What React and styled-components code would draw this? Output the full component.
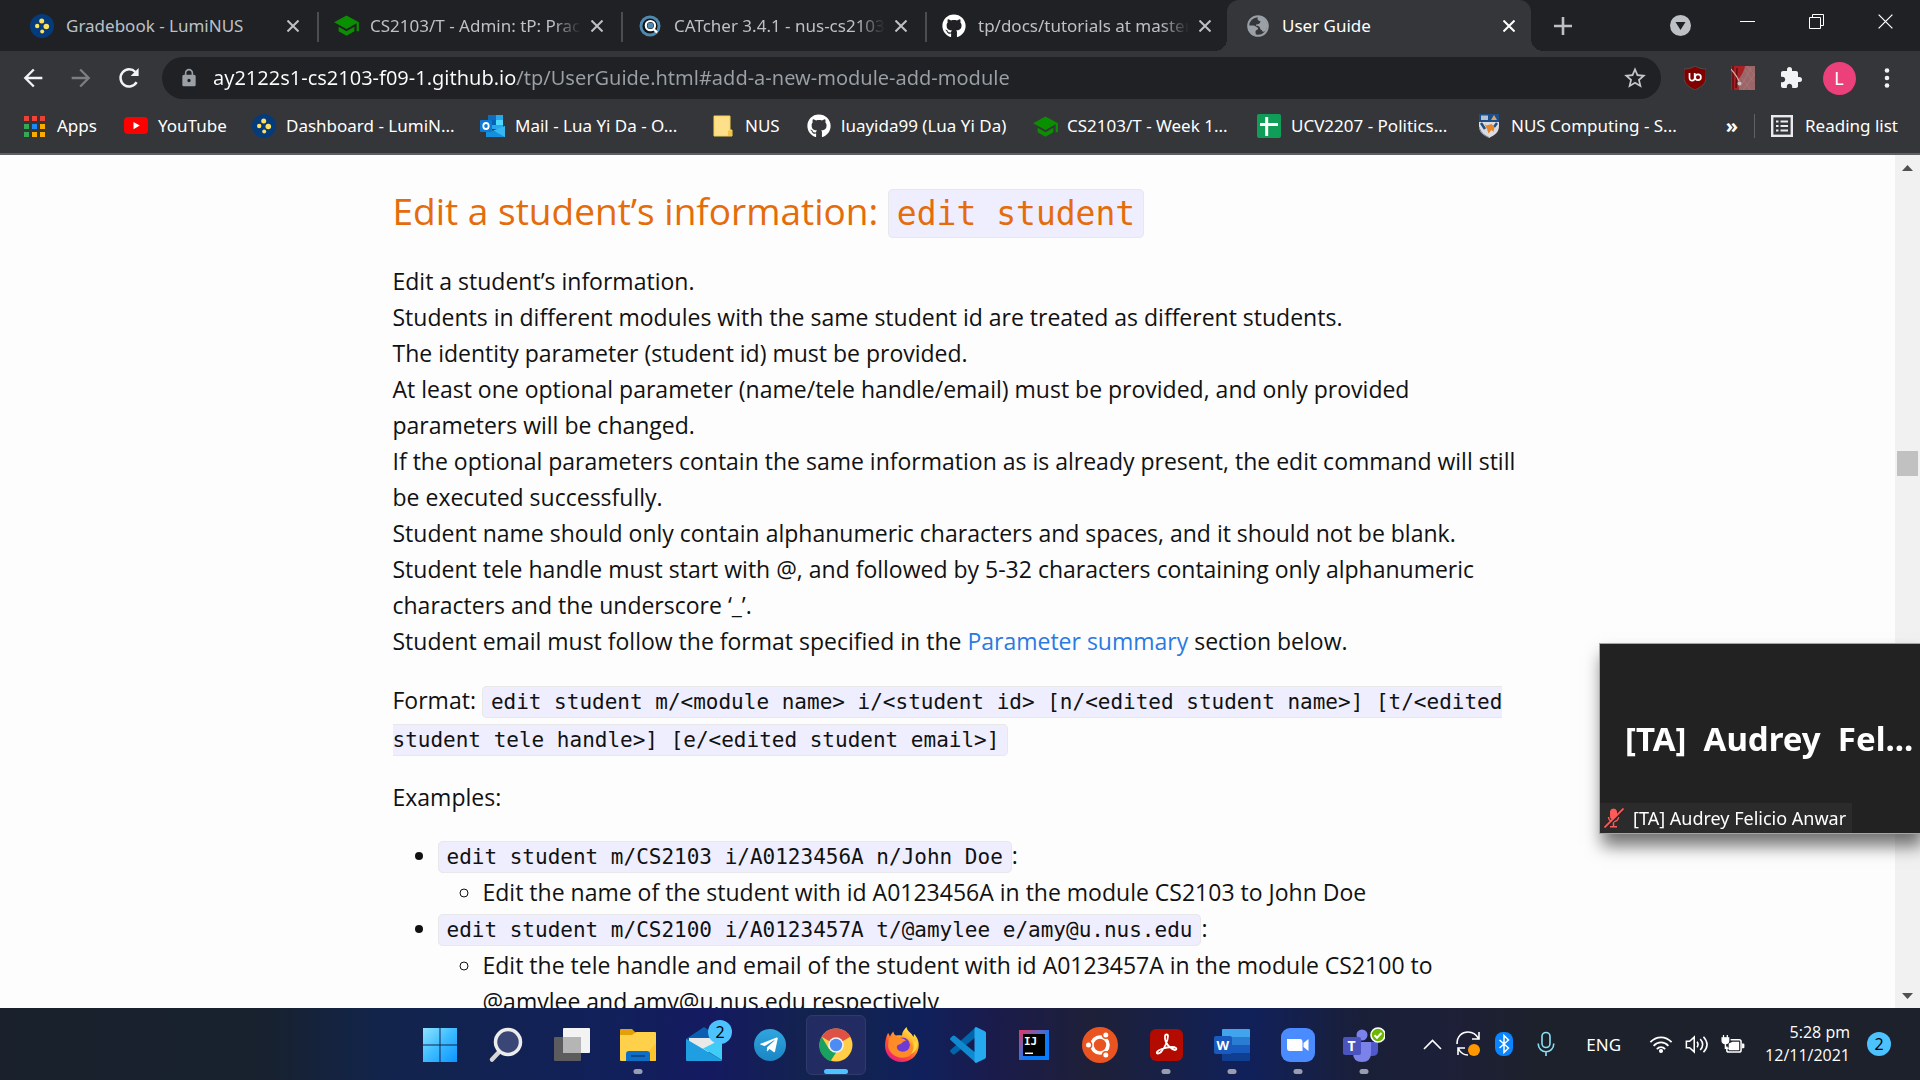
import React from "react";
import styled, { createGlobalStyle, css } from "styled-components";
import { FaGithub, FaTelegramPlane } from "react-icons/fa";
import { MdSchool, MdExtension, MdLock, MdStarBorder, MdArrowBack, MdArrowForward } from "react-icons/md";

const sans = `"Noto Sans", "Open Sans", sans-serif`;
const reading = `"Open Sans", "Noto Sans", sans-serif`;
const mono = `"DejaVu Sans Mono", monospace`;

const GlobalStyle = createGlobalStyle`
  *, *::before, *::after { box-sizing: border-box; }
  body { margin: 0; font-family: ${sans}; }
  button { border: 0; padding: 0; background: none; color: inherit; font: inherit; }
  a { text-decoration: none; color: inherit; }
  svg { display: block; flex: none; }
`;

const Screen = styled.div`
  height: 100vh;
  display: flex;
  flex-direction: column;
  overflow: hidden;
`;

/* ---------- browser chrome ---------- */

const TabStrip = styled.div`
  display: flex;
  height: 51px;
  flex: none;
  background: #202124;
  padding-left: 11px;
`;

const Tabs = styled.div`
  display: flex;
  flex: 0 1 1520px;
  min-width: 0;
`;

const Tab = styled.div`
  position: relative;
  flex: 1 1 0;
  min-width: 0;
  display: flex;
  align-items: center;
  gap: 12px;
  padding: 0 12px 0 18px;
  color: #bdc1c6;
  font-size: 17px;
  &:not(:first-child)::before {
    content: "";
    position: absolute;
    left: 2px;
    top: 12px;
    width: 2px;
    height: 30px;
    background: #4b4d51;
  }
  ${(p) =>
    p.$active &&
    css`
      background: #35363a;
      color: #fff;
      border-radius: 12px 12px 0 0;
      &&::before,
      &::after {
        content: "";
        position: absolute;
        left: -12px;
        top: auto;
        bottom: 0;
        width: 12px;
        height: 12px;
        background: radial-gradient(circle at 0 0, transparent 12px, #35363a 12px);
      }
      &::after {
        left: 100%;
        background: radial-gradient(circle at 100% 0, transparent 12px, #35363a 12px);
      }
    `}
`;

const TabTitle = styled.button`
  flex: 1;
  min-width: 0;
  overflow: hidden;
  white-space: nowrap;
  text-align: left;
  line-height: 24px;
  ${(p) => p.$fade && css`mask-image: linear-gradient(90deg, #000 calc(100% - 28px), transparent);`}
`;

const TabClose = styled.button`
  width: 20px;
  height: 20px;
  margin-left: -6px;
  display: grid;
  place-items: center;
`;

const NewTab = styled.button`
  width: 64px;
  display: grid;
  place-items: center;
  color: #bdc1c6;
`;

const WindowControls = styled.div`
  display: flex;
  margin-left: auto;
  color: #fff;
`;

const WindowButton = styled.button`
  width: 69px;
  height: 43px;
  display: grid;
  place-items: center;
`;

const TabSearch = styled(WindowButton)`
  height: 51px;
  width: 66px;
`;

const Toolbar = styled.div`
  display: flex;
  align-items: center;
  flex: none;
  height: 54px;
  padding: 0 9px;
  background: #35363a;
  color: #f1f3f4;
`;

const ToolButton = styled.button`
  width: 48px;
  height: 42px;
  display: grid;
  place-items: center;
  color: ${(p) => (p.$muted ? "#7c7e82" : "inherit")};
`;

const AddressBar = styled.label`
  flex: 1;
  min-width: 0;
  display: flex;
  align-items: center;
  gap: 14px;
  height: 42px;
  margin: 0 10px 0 9px;
  padding: 0 13px 0 17px;
  border-radius: 21px;
  background: #202124;
  color: #9aa0a6;
`;

const AddressInput = styled.input`
  flex: 1;
  min-width: 0;
  border: 0;
  outline: 0;
  padding: 0;
  height: 32px;
  font: 20px/32px ${sans};
  color: #9aa0a6;
  -webkit-text-fill-color: transparent;
  background: linear-gradient(90deg, #fff 304px, #9aa0a6 304px);
  background-clip: text;
`;

const Avatar = styled.span`
  width: 33px;
  height: 33px;
  border-radius: 50%;
  display: grid;
  place-items: center;
  background: #ec407a;
  color: #fff;
  font-size: 18px;
  line-height: 24px;
`;

const BookmarkBar = styled.nav`
  display: flex;
  align-items: center;
  flex: none;
  height: 50px;
  padding: 0 22px 6px;
  background: #35363a;
  border-bottom: 2px solid #5f6063;
  color: #fff;
  font-size: 17px;
  line-height: 24px;
`;

const Bookmark = styled.a`
  display: flex;
  align-items: center;
  gap: 10px;
  flex: 0 1 ${(p) => p.$width}px;
  min-width: 0;
  white-space: nowrap;
`;

const BookmarkIcon = styled.span`
  width: 25px;
  display: grid;
  place-items: center;
`;

const BookmarkEnd = styled.div`
  margin-left: auto;
  display: flex;
  align-items: center;
  gap: 16px;
`;

const Overflow = styled.button`
  font-size: 20px;
  font-weight: 700;
  line-height: 24px;
`;

const Divider = styled.span`
  width: 1px;
  height: 24px;
  background: #5f6368;
`;

const ReadingList = styled.button`
  display: flex;
  align-items: center;
  gap: 12px;
`;

/* ---------- document ---------- */

const Viewport = styled.main`
  flex: 1;
  min-height: 0;
  display: flex;
  background: #fdfdfd;
`;

const Scroller = styled.div`
  flex: 1;
  min-width: 0;
  overflow: hidden;
`;

const Article = styled.article`
  max-width: 1200px;
  margin: 0 auto;
  padding: 27px 22px 0 45px;
  color: #111;
  font-family: ${reading};
  font-size: 23px;
  line-height: 36px;
`;

const Code = styled.code`
  font-family: ${mono};
  font-size: ${(p) => (p.$large ? 33 : 21)}px;
  line-height: 1;
  padding: ${(p) => (p.$large ? 4 : 3)}px 8px;
  border: 1px solid #e8e8e8;
  border-radius: 5px;
  background: #eeeeff;
`;

const Heading = styled.h3`
  margin: 0 0 24px;
  color: #e46c0a;
  font-size: 37px;
  font-weight: 400;
  line-height: 57px;
`;

const Paragraph = styled.p`
  margin: 0 0 22px;
  line-height: ${(p) => (p.$coded ? 38 : 36)}px;
`;

const DocLink = styled.a`
  color: #2a7ae2;
`;

const List = styled.ul`
  margin: 0;
  padding-left: 45px;
  line-height: 37px;
`;

const SubItem = styled.li`
  line-height: 36px;
`;

const Scrollbar = styled.div`
  width: 25px;
  flex: none;
  display: flex;
  flex-direction: column;
  align-items: center;
  justify-content: space-between;
  background: #f1f1f1;
`;

const ScrollArrow = styled.button`
  height: 25px;
  display: grid;
  place-items: center;
`;

const Track = styled.div`
  flex: 1;
  display: grid;
  grid-template-rows: 271fr 25px 507fr;
`;

const Thumb = styled.div`
  grid-row: 2;
  width: 21px;
  background: #c1c1c1;
`;

/* ---------- call overlay ---------- */

const CallTile = styled.figure`
  position: fixed;
  right: 0;
  top: 643px;
  width: 321px;
  height: 191px;
  margin: 0;
  display: flex;
  flex-direction: column;
  justify-content: space-between;
  align-items: flex-start;
  background: #222;
  border: 1px solid #a5a5a5;
  border-width: 1px 0 1px 1px;
  box-shadow: 3px 12px 16px rgba(0, 0, 0, 0.55);
  color: #fff;
`;

const CallName = styled.strong`
  flex: 1;
  padding: 30px 0 0 25px;
  display: flex;
  align-items: center;
  font-size: 33px;
  line-height: 44px;
  white-space: pre;
`;

const CallLabel = styled.figcaption`
  display: flex;
  align-items: center;
  gap: 9px;
  height: 30px;
  padding: 0 6px 0 4px;
  background: #2b2b2b;
  font-size: 18px;
  line-height: 24px;
  white-space: nowrap;
`;

/* ---------- taskbar ---------- */

const Taskbar = styled.footer`
  flex: none;
  height: 72px;
  display: grid;
  grid-template-columns: minmax(0, 407fr) auto minmax(0, 523fr);
  color: #fff;
  background: linear-gradient(90deg, #1a212c 0, #17212f 14%, #12244c 20%, #11205a 32%, #151a60 37%, #12244c 43%, #10205c 48%, #1b1b4a 52%, #1e2038 57%, #10205a 65%, #1a1f38 71%, #1d1f38 75%, #1c212c 80%);
`;

const Apps = styled.div`
  grid-column: 2;
  display: flex;
`;

const AppButton = styled.button`
  width: 66px;
  padding: 7px 3px 5px;
`;

const AppFace = styled.span`
  position: relative;
  width: 60px;
  height: 60px;
  display: grid;
  place-items: center;
  border-radius: 6px;
  border: 1px solid ${(p) => (p.$active ? "#2f3a6c" : "transparent")};
  background: ${(p) => (p.$active ? "#222c62" : "transparent")};
  &::after {
    content: "";
    position: absolute;
    bottom: 0;
    left: 50%;
    width: ${(p) => (p.$active ? 24 : p.$running ? 9 : 0)}px;
    height: 5px;
    border-radius: 3px;
    transform: translateX(-50%);
    background: ${(p) => (p.$active ? "#4cc2ff" : "#9a9db0")};
  }
`;

const Badge = styled.span`
  position: absolute;
  top: 4px;
  right: 1px;
  width: 24px;
  height: 24px;
  display: grid;
  place-items: center;
  border-radius: 50%;
  background: #4cc2ff;
  color: #000;
  font-size: 16px;
  line-height: 20px;
`;

const Tray = styled.div`
  display: flex;
  align-items: center;
  justify-content: flex-end;
  gap: 12px;
  padding: 0 29px 0 0;
  font-size: 17px;
  line-height: 23px;
`;

const TrayButton = styled.button`
  width: ${(p) => (p.$text ? "auto" : "24px")};
  display: grid;
  place-items: center;
  margin-right: ${(p) => p.$gap || 0}px;
`;

const Clock = styled.time`
  text-align: right;
  margin: 0 5px 0 8px;
  font-family: ${reading};
  font-size: 16px;
`;

const Count = styled(Badge)`
  position: static;
`;

/* ---------- icons ---------- */

const Cross = ({ size = 12, w = 2 }) => (
  <svg width={size} height={size} viewBox="0 0 12 12" stroke="currentColor" strokeWidth={w}>
    <path d="M.5.5l11 11M11.5.5l-11 11" />
  </svg>
);

const Luminus = () => (
  <svg width="24" height="24" viewBox="0 0 24 24">
    <circle cx="12" cy="12" r="12" fill="#053b7a" />
    <g fill="#ffdf5e">
      <circle cx="11.7" cy="7" r="2.5" />
      <circle cx="7.2" cy="12" r="2.2" />
      <circle cx="16.3" cy="12.5" r="2.8" />
      <circle cx="12.2" cy="17.6" r="2" />
    </g>
  </svg>
);

const Catcher = () => (
  <svg width="24" height="24" viewBox="0 0 24 24" fill="none">
    <circle cx="12" cy="12" r="10.5" fill="#4f89ae" />
    <circle cx="12" cy="12" r="7.6" fill="#0d1418" />
    <circle cx="12.4" cy="11.6" r="4.6" stroke="#fff" strokeWidth="2.2" />
    <circle cx="12.4" cy="11.6" r="3" fill="#4f89ae" />
    <path d="M15 14.5l4 4" stroke="#fff" strokeWidth="2.4" />
  </svg>
);

const Globe = () => (
  <svg width="22" height="22" viewBox="0 0 22 22">
    <circle cx="11" cy="11" r="9.8" fill="#35363a" stroke="#9aa0a6" strokeWidth="2" />
    <path d="M11 1.5c-1 3-.4 4 1.6 4.4 1.6.4.6 2.6-1 3-1.6.3-2.600 0-2.600 1.800 1.600 0 4 .4 4 2.400s2 1.700 2.400 3.100c.3.900 2 .5 2.800-.2 4-5 2-13-7.200-14.500z" fill="#9aa0a6" />
    <path d="M1.300 10.600h5.200c1.700 0 2.200 1.400 3.500 1.600 1.700.4 1.200 2.400-.3 2.800-1.300.3-1.400 1.800-1 3.200.3 1 .2 1.800-.2 2.300C4.300 19.200 1.300 15.500 1.300 10.600z" fill="#9aa0a6" />
  </svg>
);

const Reload = () => (
  <svg width="22" height="22" viewBox="0 0 22 22" fill="none">
    <path d="M18.600 15.200A8.600 8.600 0 1 1 17.400 5" stroke="currentColor" strokeWidth="2.500" />
    <path d="M20.600 1v8h-8z" fill="currentColor" />
  </svg>
);

const AppsGrid = () => {
  const colors = ["#ea4335", "#f44336", "#ea4335", "#34a853", "#1e88f5", "#f9ab00", "#34a853", "#f9ab00", "#f9ab00"];
  return (
    <svg width="21" height="21" viewBox="0 0 21 21">
      {colors.map((c, i) => (
        <rect key={i} x={(i % 3) * 8} y={Math.floor(i / 3) * 8} width="5" height="5" fill={c} />
      ))}
    </svg>
  );
};

const YouTube = () => (
  <svg width="24" height="18" viewBox="0 0 24 18">
    <rect width="24" height="17" rx="4" fill="#f00" />
    <path d="M9.500 5v7.200l6.300-3.600z" fill="#fff" />
  </svg>
);

const Outlook = () => (
  <svg width="25" height="22" viewBox="0 0 25 22">
    <rect x="8" y="0" width="15" height="14" fill="#28a8ea" />
    <path d="M8 0h8v5H8z" fill="#0f6cbd" />
    <path d="M16 5h7v5h-7z" fill="#50d9ff" />
    <path d="M8 5h8v5H8z" fill="#0364b8" />
    <path d="M6 12l9.500 5L25 11v11H6z" fill="#1490df" />
    <path d="M25 11v11L13 15.500z" fill="#35b8f1" />
    <rect x="0" y="5" width="12" height="12" rx="1" fill="#0f78d4" />
    <ellipse cx="6" cy="11" rx="2.700" ry="3" fill="none" stroke="#fff" strokeWidth="1.800" />
  </svg>
);

const Folder = () => (
  <svg width="20" height="22" viewBox="0 0 20 22">
    <path d="M1 1h16v14h2v6H1z" fill="#ffe08a" stroke="#f5cf54" strokeWidth="1" />
    <path d="M15 21v-5.500h4V21z" fill="#f3c544" />
  </svg>
);

const Sheet = () => (
  <svg width="24" height="24" viewBox="0 0 24 24">
    <rect width="24" height="24" rx="2" fill="#109d58" />
    <path d="M9.700 3v19M3 10.500h18" stroke="#fff" strokeWidth="3" />
  </svg>
);

const Crest = () => (
  <svg width="20" height="24" viewBox="0 0 20 24">
    <path d="M0 0h20v12c0 6-4 9-10 12C4 21 0 18 0 12z" fill="#d9dde2" />
    <path d="M0 0h20v8H0z" fill="#1d4f86" />
    <path d="M2 1.500h7v4.500H2z" fill="#b5c1cd" />
    <path d="M12 6l3-5 3 5z" fill="#dfa26a" />
    <path d="M2 9l4 6M18 9l-3 4" stroke="#1d4f86" strokeWidth="2.500" />
    <path d="M5.500 10l2 1.500 5-1.500 3 3-1 5-2-2-3 3.500-1.500-4.500z" fill="#e8862c" />
    <path d="M0 13c1 4 4 8 10 10.500" stroke="#6d7f93" fill="none" />
  </svg>
);

const ReadingIcon = () => (
  <svg width="22" height="22" viewBox="0 0 22 22" fill="none" stroke="#e8eaed">
    <rect x="1.200" y="1.200" width="19.600" height="19.600" strokeWidth="2.400" />
    <path d="M5 6.500h2.500M9.500 6.500H17M5 11h2.500M9.500 11H17M5 15.500h2.500M9.500 15.500H17" strokeWidth="2.200" />
  </svg>
);

const UBlock = () => (
  <svg width="22" height="24" viewBox="0 0 22 24">
    <path d="M11 0c3 2.200 7 3 11 3v8c0 7-5 10-11 13C5 21 0 18 0 11V3c4 0 8-.8 11-3z" fill="#800000" stroke="#5b5257" strokeWidth=".8" />
    <path d="M5.500 7v5a2.600 2.600 0 0 0 5.200 0V7" fill="none" stroke="#fff" strokeWidth="1.700" />
    <circle cx="14" cy="11.300" r="2.900" fill="none" stroke="#fff" strokeWidth="1.700" />
  </svg>
);

const Curtain = () => (
  <svg width="24" height="24" viewBox="0 0 24 24">
    <rect width="24" height="24" fill="#9b6668" />
    <path d="M14 4l8 11M20 2L10 20M24 8L12 24M16 0l8 10M11 12l9 12" stroke="#a97476" strokeWidth="1" />
    <path d="M0 0h14c-1 6-5 11-7 14l1 10H0z" fill="#a81f24" />
    <path d="M2 0v24M6 2l-1 20" stroke="#5d1014" strokeWidth="1.500" />
    <path d="M0 3c3 4 6 7 8 12" stroke="#d8b3aa" strokeWidth="1.200" fill="none" />
    <circle cx="8.500" cy="17.500" r="2" fill="#cfc5c0" />
  </svg>
);

const WindowsLogo = () => (
  <svg width="36" height="36" viewBox="0 0 36 36">
    <defs>
      <linearGradient id="win" x1="0" y1="0" x2="1" y2="1">
        <stop offset="0" stopColor="#8fe3ff" />
        <stop offset=".5" stopColor="#3cbcff" />
        <stop offset="1" stopColor="#0d95ff" />
      </linearGradient>
    </defs>
    <path d="M1 1h16.500v16.500H1zM18.500 1H35v16.500H18.500zM1 18.500h16.500V35H1zM18.500 18.500H35V35H18.500z" fill="url(#win)" />
  </svg>
);

const SearchLogo = () => (
  <svg width="36" height="36" viewBox="0 0 36 36">
    <path d="M12 24l-8 8.500" stroke="#d6d6d6" strokeWidth="4.500" strokeLinecap="round" />
    <circle cx="20" cy="15" r="12.500" fill="#3a4676" stroke="#ececec" strokeWidth="3.500" />
  </svg>
);

const TaskView = () => (
  <svg width="36" height="36" viewBox="0 0 36 36">
    <rect x="0" y="10" width="27" height="24" rx="1" fill="#5c5c5e" />
    <rect x="9" y="1" width="27" height="25" rx="1" fill="#f3f3f3" />
    <path d="M9 10h18v16H9z" fill="#b5b5b5" />
  </svg>
);

const Explorer = () => (
  <svg width="36" height="36" viewBox="0 0 36 36">
    <path d="M0 3q0-1 1-1h11l4 4v6H0z" fill="#e3a008" />
    <path d="M0 8h12l4-3h19q1 0 1 1v27q0 1-1 1H1q-1 0-1-1z" fill="#ffd04a" />
    <path d="M20 34h16V16z" fill="#fbbd1c" opacity=".6" />
    <path d="M6 34v-7q0-3 3-3h18q3 0 3 3v7z" fill="#0f6fc6" />
    <path d="M11 29h14" stroke="#0a3f7c" strokeWidth="1.500" />
  </svg>
);

const MailLogo = () => (
  <svg width="36" height="36" viewBox="0 0 36 36">
    <path d="M0 12L18 0l18 12v10H0z" fill="#0a5fb3" />
    <path d="M3 11h30v10L18 27 3 18z" fill="#e9e9e9" />
    <path d="M0 12l36 21q0 1-1 1H1q-1 0-1-1z" fill="#1f9fe2" />
    <path d="M36 12v21L17 21.500z" fill="#3fcdf7" />
  </svg>
);

const Telegram = styled.span`
  width: 32px;
  height: 32px;
  display: grid;
  place-items: center;
  padding-right: 3px;
  border-radius: 50%;
  background: linear-gradient(#2fa6e0, #1b86c4);
  font-size: 20px;
`;

const ChromeLogo = () => (
  <svg width="34" height="34" viewBox="0 0 34 34">
    <circle cx="17" cy="17" r="16.500" fill="#ffcd46" />
    <path d="M17 17L2.700 8.750A16.500 16.500 0 0 1 31.300 8.750z" fill="#de5246" />
    <path d="M17 9h14.400l-2-3.500H17z" fill="#de5246" />
    <path d="M2.700 8.750L10 21l7 3-5.500 9.200A16.500 16.500 0 0 1 2.700 8.750z" fill="#1ba15f" />
    <path d="M11 33l6.500-9H17l-7-3z" fill="#1ba15f" />
    <circle cx="17" cy="17" r="7.800" fill="#f2f2f2" />
    <circle cx="17" cy="17" r="6.200" fill="#4d8cf5" />
  </svg>
);

const Firefox = () => (
  <svg width="36" height="36" viewBox="0 0 36 36">
    <defs>
      <linearGradient id="fox" x1=".85" y1=".05" x2=".2" y2="1">
        <stop offset="0" stopColor="#fff44f" />
        <stop offset=".35" stopColor="#ffa52a" />
        <stop offset=".65" stopColor="#ff4b3a" />
        <stop offset="1" stopColor="#e31587" />
      </linearGradient>
    </defs>
    <path d="M4 6c1 1 1.500 2.500 2 3.500C7 7 8 6 9.500 4.500c0 2 1 3.500 2.500 4 2-.5 4-.5 6 0C18 5 20 2.500 22.500 0c.5 3.500 3 5 5 7l2 3 .500-3c4 4 5.500 9 4.500 14-1.500 8.500-8.500 14-17 14C8 35 1 28 1 19c0-5 1-9 3-13z" fill="url(#fox)" />
    <circle cx="18.500" cy="18" r="7.500" fill="#6f3bd6" />
    <path d="M5 11c3-2 7-2 9 0 3 0 6 0 8 3-2 0-3 .5-4 2-2 2-4 1-5 3-1 4 4 7 9 5 4-2 5-6 3-10 6 5 5 14-2 16-9 3-18-3-19-11z" fill="#ff8c26" />
    <path d="M24 8c6 4 8 12 3 19 5-2 8-8 6-14-1 2-2 2-3 1-1-3-4-4-6-6z" fill="#ffd43a" />
  </svg>
);

const VsCode = () => (
  <svg width="36" height="36" viewBox="0 0 36 36">
    <path d="M26 0l1 9L5 27q-1.500 1-2.500 0L.5 25q-1-1 0-2z" fill="#0065a9" />
    <path d="M26 36l1-9L5 9Q3.500 8 2.500 9L.5 11q-1 1 0 2z" fill="#0f8ad0" />
    <path d="M26 0l8.500 4q1.500 1 1.500 2v24q0 1-1.500 2L26 36q-1.500-.5-1.500-2V2q0-1.500 1.500-2z" fill="#25aaf0" />
  </svg>
);

const LogoLetters = styled.text`
  font: 700 ${(p) => p.$size}px ${(p) => (p.$mono ? mono : sans)};
  fill: #fff;
`;

const IntelliJ = () => (
  <svg width="30" height="30" viewBox="0 0 30 30">
    <defs>
      <linearGradient id="ij" x1="0" y1="0" x2="1" y2="1">
        <stop offset="0" stopColor="#e8345f" />
        <stop offset=".35" stopColor="#6c63b8" />
        <stop offset=".6" stopColor="#087cfa" />
      </linearGradient>
    </defs>
    <rect width="30" height="30" fill="url(#ij)" />
    <rect x="4" y="4" width="22" height="22" fill="#000" />
    <LogoLetters x="5" y="15" $size={11} $mono>IJ</LogoLetters>
    <path d="M6 23.300h8" stroke="#fff" strokeWidth="1.500" />
  </svg>
);

const Ubuntu = () => (
  <svg width="36" height="36" viewBox="0 0 36 36" fill="none">
    <circle cx="18" cy="18" r="18" fill="#e95420" />
    <circle cx="18" cy="18" r="8" stroke="#fff" strokeWidth="3.600" />
    <g fill="#fff" stroke="#e95420" strokeWidth="1.400">
      <circle cx="6.500" cy="18" r="3.200" />
      <circle cx="23.800" cy="8" r="3.200" />
      <circle cx="23.800" cy="28" r="3.200" />
    </g>
  </svg>
);

const Acrobat = () => (
  <svg width="33" height="32" viewBox="0 0 33 32">
    <rect width="33" height="32" rx="6" fill="#b30b00" />
    <path d="M15 7c0-2 3-2 3 0 0 5-4 13-7 16-2 2-5 2-4 0 1-2 8-5 15-5 4 0 5 1.500 4 2.500-2 2-12-5-11-13.500z" fill="none" stroke="#fff" strokeWidth="1.800" />
  </svg>
);

const Word = () => (
  <svg width="36" height="34" viewBox="0 0 36 34">
    <path d="M8 2q0-1 1-1h26q1 0 1 1v7H8z" fill="#41a5ee" />
    <path d="M8 9h28v8H8z" fill="#2b7cd3" />
    <path d="M8 17h28v8H8z" fill="#185abd" />
    <path d="M8 25h28v7q0 1-1 1H9q-1 0-1-1z" fill="#103f91" />
    <rect x="0" y="8" width="18" height="18" rx="2" fill="#185abd" />
    <LogoLetters x="2.500" y="21.500" $size={13}>W</LogoLetters>
  </svg>
);

const ZoomLogo = () => (
  <svg width="34" height="34" viewBox="0 0 34 34">
    <rect width="34" height="34" rx="9" fill="#4a8cff" />
    <path d="M6 11h13q2.500 0 2.500 3v9h-13Q6 23 6 20zM22.500 15l5-4v12l-5-4z" fill="#fff" />
  </svg>
);

const Teams = () => (
  <svg width="42" height="36" viewBox="0 0 42 36">
    <circle cx="19" cy="8" r="5.500" fill="#7b83eb" />
    <path d="M24 15h11v9q0 5-6 5h-5z" fill="#5059c9" />
    <path d="M10 15h18v11q0 9-9 9t-9-9z" fill="#7b83eb" />
    <rect x="0" y="10" width="18" height="18" rx="2" fill="#4b53bc" />
    <LogoLetters x="4.500" y="24" $size={14}>T</LogoLetters>
    <circle cx="35" cy="8" r="7" fill="#6bb700" stroke="#fff" strokeWidth="1.600" />
    <path d="M31.500 8.200l2.500 2.500 4.500-4.700" fill="none" stroke="#fff" strokeWidth="2" />
  </svg>
);

const trayStroke = { fill: "none", stroke: "currentColor", strokeWidth: 1.6 };

const Update = () => (
  <svg width="24" height="26" viewBox="0 0 24 26">
    <g {...trayStroke}>
      <path d="M1 13C1 5 6 1 12 1c5 0 8 2 10.500 6.500M23 1v7h-7M9 17H2v7M2 17c2 4 6 7 10 7" />
    </g>
    <circle cx="18" cy="19" r="6" fill="#ff9800" />
  </svg>
);

const Bluetooth = () => (
  <svg width="18" height="24" viewBox="0 0 18 24">
    <rect width="18" height="24" rx="8" fill="#0a84ff" />
    <path d="M4.500 8l9 8-4.500 4.500v-17L13.500 8l-9 8" fill="none" stroke="#fff" strokeWidth="1.500" />
  </svg>
);

const TrayMic = () => (
  <svg width="18" height="26" viewBox="0 0 18 26" fill="none" stroke="#8be0f5" strokeWidth="1.600">
    <rect x="5" y="1.500" width="8" height="15" rx="4" />
    <path d="M1.200 12.500c0 11 15.600 11 15.600 0M9 20.500V25" />
  </svg>
);

const Wifi = () => (
  <svg width="24" height="19" viewBox="0 0 26 20" {...trayStroke} strokeWidth="1.900">
    <path d="M1.500 7.500C8 .5 18 .5 24.500 7.500M5 11.500c4.500-5 11.500-5 16 0M8.500 15c2.500-3 6.500-3 9 0" />
    <circle cx="13" cy="17" r="1.300" fill="currentColor" />
  </svg>
);

const Speaker = () => (
  <svg width="24" height="21" viewBox="0 0 26 22" {...trayStroke} strokeWidth="1.700">
    <path d="M1.500 7.500H5L10 3v16l-5-4.500H1.500zM13 8c1.500 2 1.500 4 0 6M16.500 5c3.500 4 3.500 8 0 12M20 2.500c5 5.500 5 11.500 0 17" />
  </svg>
);

const Battery = () => (
  <svg width="24" height="19" viewBox="0 0 25 20">
    <path d="M10 5h9q2 0 2 2v9q0 2-2 2H8q-2 0-2-2v-4" fill="none" stroke="#fff" strokeWidth="1.600" />
    <path d="M8 9l4-2h7v9H8zM22 9h1.500q1 0 1 1v3q0 1-1 1H22z" fill="#fff" />
    <path d="M1 3h7v3q0 3-3.500 3T1 6zM2.500 0v3M6.500 0v3" fill="#fff" stroke="#fff" strokeWidth="1.300" />
    <path d="M4.500 9v5H8" fill="none" stroke="#fff" strokeWidth="1.500" />
  </svg>
);

const MutedMic = () => (
  <svg width="20" height="20" viewBox="0 0 20 20" stroke="#ff5b58" fill="none">
    <rect x="6.500" y="1" width="6" height="10.500" rx="3" fill="#ff5b58" />
    <path d="M4.500 9c0 6 10 6 10 0M9.500 14v4.500M6 18.700h7" strokeWidth="1.500" />
    <path d="M1.500 20.500L20.500 1.500" stroke="#2b2b2b" strokeWidth="2" />
    <path d="M.5 19.500L19.500.5" strokeWidth="1.700" />
  </svg>
);

/* ---------- data ---------- */

const tabs = [
  { title: "Gradebook - LumiNUS", icon: <Luminus /> },
  { title: "CS2103/T - Admin: tP: Prac", icon: <MdSchool size={27} color="#0a8f00" />, fade: true },
  { title: "CATcher 3.4.1 - nus-cs2103", icon: <Catcher />, fade: true },
  { title: "tp/docs/tutorials at master", icon: <FaGithub size={24} color="#fff" />, fade: true },
  { title: "User Guide", icon: <Globe />, active: true },
];

const bookmarks = [
  { label: "Apps", icon: <AppsGrid />, width: 101 },
  { label: "YouTube", icon: <YouTube />, width: 128 },
  { label: "Dashboard - LumiN...", icon: <Luminus />, width: 229 },
  { label: "Mail - Lua Yi Da - O...", icon: <Outlook />, width: 230 },
  { label: "NUS", icon: <Folder />, width: 96 },
  { label: "luayida99 (Lua Yi Da)", icon: <FaGithub size={24} />, width: 226 },
  { label: "CS2103/T - Week 1...", icon: <MdSchool size={27} color="#0a8f00" />, width: 224 },
  { label: "UCV2207 - Politics...", icon: <Sheet />, width: 220 },
  { label: "NUS Computing - S...", icon: <Crest />, width: 208 },
];

const apps = [
  { name: "Start", icon: <WindowsLogo /> },
  { name: "Search", icon: <SearchLogo /> },
  { name: "Task View", icon: <TaskView /> },
  { name: "File Explorer", icon: <Explorer />, running: true },
  { name: "Mail", icon: <MailLogo />, badge: 2 },
  { name: "Telegram", icon: <Telegram><FaTelegramPlane /></Telegram> },
  { name: "Chrome", icon: <ChromeLogo />, active: true },
  { name: "Firefox", icon: <Firefox /> },
  { name: "Visual Studio Code", icon: <VsCode /> },
  { name: "IntelliJ IDEA", icon: <IntelliJ /> },
  { name: "Ubuntu", icon: <Ubuntu /> },
  { name: "Acrobat", icon: <Acrobat />, running: true },
  { name: "Word", icon: <Word />, running: true },
  { name: "Zoom", icon: <ZoomLogo />, running: true },
  { name: "Teams", icon: <Teams />, running: true },
];

const url = "ay2122s1-cs2103-f09-1.github.io/tp/UserGuide.html#add-a-new-module-add-module";

export default function App() {
  return (
    <Screen>
      <GlobalStyle />
      <TabStrip>
        <Tabs>
          {tabs.map((t) => (
            <Tab key={t.title} $active={t.active}>
              <BookmarkIcon>{t.icon}</BookmarkIcon>
              <TabTitle $fade={t.fade}>{t.title}</TabTitle>
              <TabClose aria-label="Close tab"><Cross /></TabClose>
            </Tab>
          ))}
        </Tabs>
        <NewTab aria-label="New tab">
          <svg width="18" height="18" viewBox="0 0 18 18" stroke="currentColor" strokeWidth="2.600"><path d="M9 0v18M0 9h18" /></svg>
        </NewTab>
        <WindowControls>
          <TabSearch aria-label="Search tabs">
            <svg width="21" height="21" viewBox="0 0 21 21"><circle cx="10.500" cy="10.500" r="10.500" fill="#bdc1c6" /><path d="M5.500 7h10l-5 8z" fill="#202124" /></svg>
          </TabSearch>
          <WindowButton aria-label="Minimize">
            <svg width="15" height="15" viewBox="0 0 15 15" stroke="#fff"><path d="M0 7.500h15" /></svg>
          </WindowButton>
          <WindowButton aria-label="Restore">
            <svg width="15" height="15" viewBox="0 0 15 15" stroke="#fff" fill="none"><path d="M.5 3.500h11v11H.5zM3.500 3.500v-3h11v11h-3" /></svg>
          </WindowButton>
          <WindowButton aria-label="Close"><Cross size={15} w={1} /></WindowButton>
        </WindowControls>
      </TabStrip>

      <Toolbar>
        <ToolButton aria-label="Back"><MdArrowBack size={28} /></ToolButton>
        <ToolButton aria-label="Forward" $muted><MdArrowForward size={28} /></ToolButton>
        <ToolButton aria-label="Reload"><Reload /></ToolButton>
        <AddressBar>
          <MdLock size={20} color="#9aa0a6" />
          <AddressInput aria-label="Address" defaultValue={url} />
          <MdStarBorder size={26} color="#c4c7cb" />
        </AddressBar>
        <ToolButton aria-label="uBlock Origin"><UBlock /></ToolButton>
        <ToolButton aria-label="Curtain"><Curtain /></ToolButton>
        <ToolButton aria-label="Extensions"><MdExtension size={24} /></ToolButton>
        <ToolButton aria-label="Profile"><Avatar>L</Avatar></ToolButton>
        <ToolButton aria-label="Menu">
          <svg width="6" height="20" viewBox="0 0 6 20" fill="currentColor"><circle cx="3" cy="2.500" r="2.300" /><circle cx="3" cy="10" r="2.300" /><circle cx="3" cy="17.500" r="2.300" /></svg>
        </ToolButton>
      </Toolbar>

      <BookmarkBar>
        {bookmarks.map((b) => (
          <Bookmark key={b.label} href="#" $width={b.width}>
            <BookmarkIcon>{b.icon}</BookmarkIcon>
            {b.label}
          </Bookmark>
        ))}
        <BookmarkEnd>
          <Overflow aria-label="More bookmarks">»</Overflow>
          <Divider />
          <ReadingList><ReadingIcon />Reading list</ReadingList>
        </BookmarkEnd>
      </BookmarkBar>

      <Viewport>
        <Scroller>
          <Article>
            <Heading>Edit a student’s information: <Code $large>edit student</Code></Heading>
            <Paragraph>
              Edit a student’s information.<br />
              Students in different modules with the same student id are treated as different students.<br />
              The identity parameter (student id) must be provided.<br />
              At least one optional parameter (name/tele handle/email) must be provided, and only provided parameters will be changed.<br />
              If the optional parameters contain the same information as is already present, the edit command will still be executed successfully.<br />
              Student name should only contain alphanumeric characters and spaces, and it should not be blank.<br />
              Student tele handle must start with @, and followed by 5-32 characters containing only alphanumeric characters and the underscore ‘_’.<br />
              Student email must follow the format specified in the <DocLink href="#parameter-summary">Parameter summary</DocLink> section below.
            </Paragraph>
            <Paragraph $coded>
              Format: <Code>{"edit student m/<module name> i/<student id> [n/<edited student name>] [t/<edited student tele handle>] [e/<edited student email>]"}</Code>
            </Paragraph>
            <Paragraph>Examples:</Paragraph>
            <List>
              <li>
                <Code>edit student m/CS2103 i/A0123456A n/John Doe</Code>:
                <List>
                  <SubItem>Edit the name of the student with id A0123456A in the module CS2103 to John Doe</SubItem>
                </List>
              </li>
              <li>
                <Code>edit student m/CS2100 i/A0123457A t/@amylee e/amy@u.nus.edu</Code>:
                <List>
                  <SubItem>Edit the tele handle and email of the student with id A0123457A in the module CS2100 to @amylee and amy@u.nus.edu respectively</SubItem>
                </List>
              </li>
            </List>
          </Article>
        </Scroller>
        <Scrollbar>
          <ScrollArrow aria-label="Scroll up"><svg width="11" height="6" viewBox="0 0 11 6"><path d="M0 6h11L5.500 0z" fill="#505050" /></svg></ScrollArrow>
          <Track><Thumb /></Track>
          <ScrollArrow aria-label="Scroll down"><svg width="11" height="6" viewBox="0 0 11 6"><path d="M0 0h11L5.500 6z" fill="#505050" /></svg></ScrollArrow>
        </Scrollbar>
      </Viewport>

      <CallTile>
        <CallName>{"[TA]  Audrey  Fel..."}</CallName>
        <CallLabel><MutedMic />[TA] Audrey Felicio Anwar</CallLabel>
      </CallTile>

      <Taskbar>
        <Apps>
          {apps.map((a) => (
            <AppButton key={a.name} aria-label={a.name}>
              <AppFace $active={a.active} $running={a.running}>
                {a.icon}
                {a.badge && <Badge>{a.badge}</Badge>}
              </AppFace>
            </AppButton>
          ))}
        </Apps>
        <Tray>
          <TrayButton aria-label="Hidden icons"><svg width="19" height="11" viewBox="0 0 19 11" {...trayStroke}><path d="M1 10l8.500-8.500L18 10" /></svg></TrayButton>
          <TrayButton aria-label="Updates"><Update /></TrayButton>
          <TrayButton aria-label="Bluetooth" $gap={6}><Bluetooth /></TrayButton>
          <TrayButton aria-label="Microphone" $gap={16}><TrayMic /></TrayButton>
          <TrayButton $text $gap={16}>ENG</TrayButton>
          <TrayButton aria-label="Network"><Wifi /></TrayButton>
          <TrayButton aria-label="Volume"><Speaker /></TrayButton>
          <TrayButton aria-label="Battery"><Battery /></TrayButton>
          <Clock>5:28 pm<br />12/11/2021</Clock>
          <Count>2</Count>
        </Tray>
      </Taskbar>
    </Screen>
  );
}
